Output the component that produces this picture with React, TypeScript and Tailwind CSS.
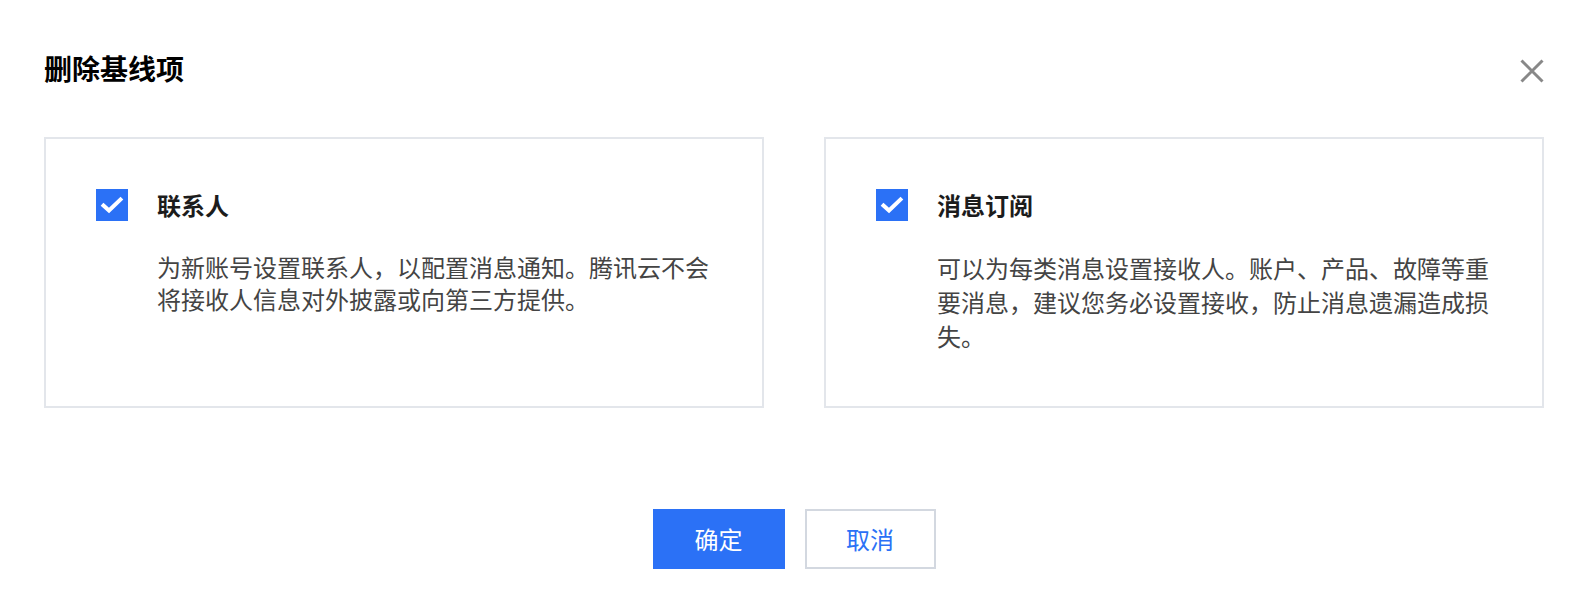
import React, { useState } from "react";

type Option = {
  id: string;
  title: string;
  desc: string;
  leading: string;
};

const options: Option[] = [
  {
    id: "contact",
    title: "联系人",
    desc: "为新账号设置联系人，以配置消息通知。腾讯云不会将接收人信息对外披露或向第三方提供。",
    leading: "leading-8",
  },
  {
    id: "subscribe",
    title: "消息订阅",
    desc: "可以为每类消息设置接收人。账户、产品、故障等重要消息，建议您务必设置接收，防止消息遗漏造成损失。",
    leading: "leading-[34px]",
  },
];

function CheckBox({ checked, onToggle }: { checked: boolean; onToggle: () => void }) {
  return (
    <button
      type="button"
      onClick={onToggle}
      className={
        checked
          ? "flex h-8 w-8 shrink-0 items-center justify-center bg-[#2b71f6]"
          : "flex h-8 w-8 shrink-0 items-center justify-center border-2 border-[#c9ced6] bg-white"
      }
    >
      {checked && (
        <svg width="32" height="32" viewBox="0 0 32 32" fill="none">
          <path d="M7.5 16.5 L13 21.5 L24.5 10.5" stroke="white" strokeWidth="4" strokeLinecap="square" />
        </svg>
      )}
    </button>
  );
}

export default function App() {
  const [checked, setChecked] = useState<Record<string, boolean>>({ contact: true, subscribe: true });

  return (
    <div className="min-h-[606px] w-full bg-white px-[44px] pt-[47px] font-['Noto_Sans_CJK_SC','Noto_Sans',sans-serif]">
      <div className="flex items-start justify-between">
        <h2 className="h-[42px] text-[28px] leading-[42px] font-bold text-black">删除基线项</h2>
        <button type="button" className="mt-[12px]">
          <svg width="24" height="24" viewBox="0 0 24 24" fill="none">
            <path d="M1.5 1.5 L22.5 22.5 M22.5 1.5 L1.5 22.5" stroke="#888888" strokeWidth="3" />
          </svg>
        </button>
      </div>

      <div className="mt-[48px] grid grid-cols-2 gap-[60px]">
        {options.map((o) => (
          <div key={o.id} className="border-2 border-[#e3e6eb] px-[50px] pt-[50px] pb-[53px]">
            <div className="flex items-center gap-[29px]">
              <CheckBox
                checked={checked[o.id]}
                onToggle={() => setChecked((c) => ({ ...c, [o.id]: !c[o.id] }))}
              />
              <span className="text-[24px] leading-8 font-bold text-[#1c1c1c]">{o.title}</span>
            </div>
            <p className={`mt-[30px] pl-[61px] text-[24px] text-[#444] ${o.leading}`}>{o.desc}</p>
          </div>
        ))}
      </div>

      <div className="mt-[101px] flex justify-center gap-5">
        <button type="button" className="h-[60px] w-[132px] bg-[#2b71f6] text-[24px] text-white">
          确定
        </button>
        <button
          type="button"
          className="h-[60px] w-[131px] border-2 border-[#d3d8e0] bg-white text-[24px] text-[#2b71f6]"
        >
          取消
        </button>
      </div>
    </div>
  );
}
